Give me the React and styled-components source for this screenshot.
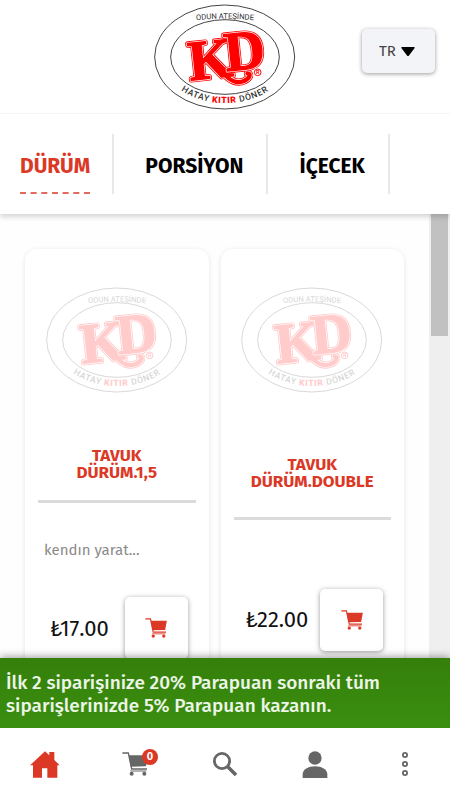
import { useState } from "react";
import styled, { createGlobalStyle } from "styled-components";

const GlobalStyle = createGlobalStyle`
  * {
    box-sizing: border-box;
  }

  body {
    margin: 0;
    background: #fefefe;
    font-family: "Fira Sans", "Noto Sans", sans-serif;
    color: #111;
  }

  button, select {
    font-family: inherit;
  }
`;

const Page = styled.div`
  display: flex;
  flex-direction: column;
  height: 100vh;
`;

const Header = styled.header`
  display: grid;
  grid-template-columns: 1fr auto 1fr;
  align-items: center;
  flex: none;
  padding: 4px 15px 3px;
  border-bottom: 1px solid #f8f8f8;
  background: #fff;
`;

const HomeLink = styled.a`
  display: block;
  grid-column: 2;
`;

const LogoSvg = styled.svg`
  display: block;
  width: 142px;
  height: 106px;
  opacity: ${({ $faded }) => ($faded ? 0.2 : 1)};
`;

const LanguageBox = styled.label`
  position: relative;
  justify-self: end;
  margin-bottom: 12px;
`;

const LanguageSelect = styled.select`
  display: block;
  appearance: none;
  width: 73px;
  height: 44px;
  padding: 0 0 0 17px;
  border: none;
  border-radius: 5px;
  background: #f3f4f8;
  box-shadow: 0 1px 4px rgba(0, 0, 0, 0.4);
  color: #444;
  font-size: 15px;
`;

const Caret = styled.svg`
  position: absolute;
  top: 18px;
  right: 20px;
  width: 14px;
  height: 9px;
  pointer-events: none;
`;

const Categories = styled.nav`
  display: flex;
  flex: none;
  z-index: 1;
  padding: 20px 0;
  background: #fff;
  box-shadow: 0 3px 5px rgba(0, 0, 0, 0.16);
`;

const Category = styled.div`
  padding: 0 23px 0 31px;
  border-right: 2px solid #e8e8e8;

  &:first-child {
    padding-left: 20px;
    padding-right: 22px;
  }
`;

const CategoryLink = styled.a`
  display: flex;
  align-items: center;
  height: 60px;
  padding-top: 6px;
  border-bottom: 2px dashed ${({ $active }) => ($active ? "#e2695d" : "transparent")};
  color: ${({ $active }) => ($active ? "#dc3826" : "#000")};
  font-size: 21px;
  font-weight: 700;
  text-decoration: none;
`;

const Content = styled.main`
  display: flex;
  flex: 1;
  min-height: 0;
`;

const ProductList = styled.div`
  display: grid;
  grid-template-columns: 1fr 1fr;
  align-items: stretch;
  align-content: start;
  gap: 12px;
  flex: 1;
  padding: 35px 25px;
  overflow: hidden;
`;

const ScrollTrack = styled.div`
  flex: none;
  width: 21px;
  padding: 0 2px;
  background: #efefef;
`;

const ScrollThumb = styled.div`
  height: 122px;
  background: #c1c1c1;
`;

const Card = styled.article`
  display: flex;
  flex-direction: column;
  min-width: 0;
  padding: 38px 13px 30px;
  border-radius: 12px;
  background: #fff;
  box-shadow: 0 1px 5px rgba(0, 0, 0, 0.1);
`;

const CardPicture = styled.div`
  display: flex;
  justify-content: center;
  height: 141px;
`;

const CardTitle = styled.h2`
  display: flex;
  flex: 1 0 auto;
  align-items: center;
  justify-content: center;
  margin: 0;
  padding: 19px 0;
  border-bottom: 3px solid #dbdbdb;
  color: #dc3826;
  font-size: 17px;
  font-weight: 700;
  line-height: 17px;
  text-align: center;
`;

const CardText = styled.p`
  margin: 0;
  padding: 30px 6px;
  color: #8a8a8a;
  font-size: 15px;
  line-height: 34px;
`;

const BuyRow = styled.div`
  display: flex;
  flex: 1 0 auto;
  align-items: center;
  justify-content: space-between;
  padding: 0 8px 1px 12px;
`;

const Price = styled.span`
  font-size: 22px;
`;

const BuyButton = styled.button`
  display: flex;
  align-items: center;
  justify-content: center;
  width: 63px;
  height: 62px;
  border: none;
  border-radius: 5px;
  background: #fff;
  box-shadow: 0 1px 5px rgba(0, 0, 0, 0.4);
  color: #dc3826;
`;

const Banner = styled.p`
  flex: none;
  z-index: 1;
  margin: 0;
  padding: 13px 6px 11px;
  background: linear-gradient(#357f0b, #3a8f10);
  box-shadow: 0 -1px 8px rgba(0, 0, 0, 0.4);
  color: #ecf5e7;
  font-size: 19px;
  font-weight: 500;
  line-height: 23px;
`;

const BottomBar = styled.nav`
  display: grid;
  grid-template-columns: repeat(5, 1fr);
  flex: none;
  z-index: 2;
  height: 72px;
  background: #fff;
`;

const BottomLink = styled.a`
  display: flex;
  align-items: center;
  justify-content: center;
  color: ${({ $active }) => ($active ? "#dc3826" : "#666")};
`;

const IconBox = styled.span`
  position: relative;
  display: flex;
`;

const Badge = styled.span`
  position: absolute;
  top: -3px;
  right: -10px;
  width: 16px;
  height: 16px;
  border-radius: 50%;
  background: #dc3826;
  color: #fff;
  font-size: 11px;
  font-weight: 700;
  line-height: 16px;
  text-align: center;
`;

// every part of the mark is laid three times: red edge, white line, red face
const layers = [
  { color: "#f00", width: 13 },
  { color: "#fff", width: 8 },
  { color: "#f00", width: 4 },
];

function Logo({ id, faded }) {
  return (
    <LogoSvg viewBox="26 11 426 318" $faded={faded} role="img" aria-label="Hatay Kıtır Döner">
      <defs>
        <path id={`${id}-top`} d="M130 63 Q239 47 348 63" />
        <path id={`${id}-bottom`} d="M62 225 A196 146 0 0 0 416 225" />
      </defs>
      <g fill="none" stroke="#444" strokeWidth="3">
        <ellipse cx="238" cy="170" rx="210" ry="156" />
        <ellipse cx="239" cy="170" rx="163" ry="112" />
      </g>
      <text fontFamily="'Liberation Sans Narrow', 'Roboto', sans-serif" fontSize="23" fill="#333" textAnchor="middle">
        <textPath href={`#${id}-top`} startOffset="50%">ODUN ATEŞİNDE</textPath>
      </text>
      <text fontFamily="'Roboto', sans-serif" fontSize="26" fontWeight="500" fill="#333" textAnchor="middle" letterSpacing="2">
        <textPath href={`#${id}-bottom`} startOffset="50%">
          HATAY <tspan fill="#f00" fontWeight="900">KITIR</tspan> DÖNER
        </textPath>
      </text>
      <g fontFamily="'Liberation Serif', serif" fontWeight="700" strokeLinejoin="round" transform="rotate(-6 239 170)">
        {layers.map(({ color, width }) => (
          <g key={width} fill={color} stroke={color} strokeWidth={width}>
            <text x="128" y="229" fontSize="170">K</text>
            <path
              d="M207 178 L230 218 C246 244 268 254 290 247 C308 240 312 227 301 226"
              fill="none"
              strokeWidth={width + 9}
              strokeLinecap="round"
            />
          </g>
        ))}
        {layers.map(({ color, width }) => (
          <text key={width} x="238" y="213" fontSize="168" fill={color} stroke={color} strokeWidth={width}>D</text>
        ))}
      </g>
      <circle cx="337" cy="216" r="14" fill="#fff" />
      <circle cx="337" cy="216" r="10" fill="none" stroke="#f00" strokeWidth="3" />
      <text x="337" y="222" fontFamily="'Roboto', sans-serif" fontSize="16" fontWeight="700" fill="#f00" textAnchor="middle">R</text>
    </LogoSvg>
  );
}

function CartIcon({ width, height }) {
  return (
    <svg width={width} height={height} viewBox="0 0 78 72" fill="currentColor" aria-hidden="true">
      <path d="M1 3h18l10 48h46" fill="none" stroke="currentColor" strokeWidth="4" />
      <path d="M20 10h58l-6 33-46 1z" />
      <path d="M25 57h48" stroke="currentColor" strokeWidth="3" />
      <circle cx="29" cy="65" r="6" />
      <circle cx="67" cy="65" r="6" />
    </svg>
  );
}

function HomeIcon() {
  return (
    <svg width="30" height="27" viewBox="0 0 90 81" fill="currentColor" aria-hidden="true">
      <path d="M0 43L45 1l13 12V3h15v24l16 16h-7v37H52V52H36v28H9V43z" />
    </svg>
  );
}

function SearchIcon() {
  return (
    <svg width="26" height="26" viewBox="0 0 26 26" fill="none" stroke="currentColor" aria-hidden="true">
      <circle cx="10" cy="10" r="7.6" strokeWidth="2.8" />
      <path d="M15.5 15.5L24 24" strokeWidth="3.6" />
    </svg>
  );
}

function PersonIcon() {
  return (
    <svg width="26" height="27" viewBox="0 0 78 81" fill="currentColor" aria-hidden="true">
      <circle cx="39" cy="21" r="20" />
      <path d="M2 81V70c0-15 17-24 37-24s37 9 37 24v11z" />
    </svg>
  );
}

function MoreIcon() {
  return (
    <svg width="8" height="26" viewBox="0 0 8 26" fill="none" stroke="currentColor" strokeWidth="1.8" aria-hidden="true">
      <circle cx="4" cy="4" r="2.1" />
      <circle cx="4" cy="13" r="2.1" />
      <circle cx="4" cy="22" r="2.1" />
    </svg>
  );
}

const categories = ["DÜRÜM", "PORSİYON", "İÇECEK"];

const products = [
  { id: "p1", title: ["TAVUK", "DÜRÜM.1,5"], text: "kendın yarat...", price: "₺17.00" },
  { id: "p2", title: ["TAVUK", "DÜRÜM.DOUBLE"], text: "", price: "₺22.00" },
];

function Product({ product, onBuy }) {
  return (
    <Card>
      <CardPicture>
        <Logo id={product.id} faded />
      </CardPicture>
      <CardTitle>
        <span>
          {product.title[0]}
          <br />
          {product.title[1]}
        </span>
      </CardTitle>
      <CardText>{product.text}</CardText>
      <BuyRow>
        <Price>{product.price}</Price>
        <BuyButton type="button" aria-label="Sepete ekle" onClick={onBuy}>
          <CartIcon width={22} height={20} />
        </BuyButton>
      </BuyRow>
    </Card>
  );
}

function App() {
  const [active, setActive] = useState("DÜRÜM");
  const [count, setCount] = useState(0);

  return (
    <Page>
      <GlobalStyle />
      <Header>
        <HomeLink href="#home">
          <Logo id="main" />
        </HomeLink>
        <LanguageBox>
          <LanguageSelect aria-label="Dil" defaultValue="TR">
            <option>TR</option>
            <option>EN</option>
          </LanguageSelect>
          <Caret viewBox="0 0 14 9" aria-hidden="true">
            <path d="M1 0h12q1 0 .6 1L8 8.400q-1 1-2 0L.4 1Q0 0 1 0z" />
          </Caret>
        </LanguageBox>
      </Header>

      <Categories>
        {categories.map((name) => (
          <Category key={name}>
            <CategoryLink href="#menu" $active={name === active} onClick={() => setActive(name)}>
              {name}
            </CategoryLink>
          </Category>
        ))}
      </Categories>

      <Content>
        <ProductList>
          {products.map((product) => (
            <Product key={product.id} product={product} onBuy={() => setCount(count + 1)} />
          ))}
        </ProductList>
        <ScrollTrack>
          <ScrollThumb />
        </ScrollTrack>
      </Content>

      <Banner>İlk 2 siparişinize 20% Parapuan sonraki tüm siparişlerinizde 5% Parapuan kazanın.</Banner>

      <BottomBar>
        <BottomLink href="#home" aria-label="Ana sayfa" $active>
          <HomeIcon />
        </BottomLink>
        <BottomLink href="#cart" aria-label="Sepet">
          <IconBox>
            <CartIcon width={26} height={24} />
            <Badge>{count}</Badge>
          </IconBox>
        </BottomLink>
        <BottomLink href="#search" aria-label="Ara">
          <SearchIcon />
        </BottomLink>
        <BottomLink href="#account" aria-label="Hesap">
          <PersonIcon />
        </BottomLink>
        <BottomLink href="#more" aria-label="Diğer">
          <MoreIcon />
        </BottomLink>
      </BottomBar>
    </Page>
  );
}

export default App;
